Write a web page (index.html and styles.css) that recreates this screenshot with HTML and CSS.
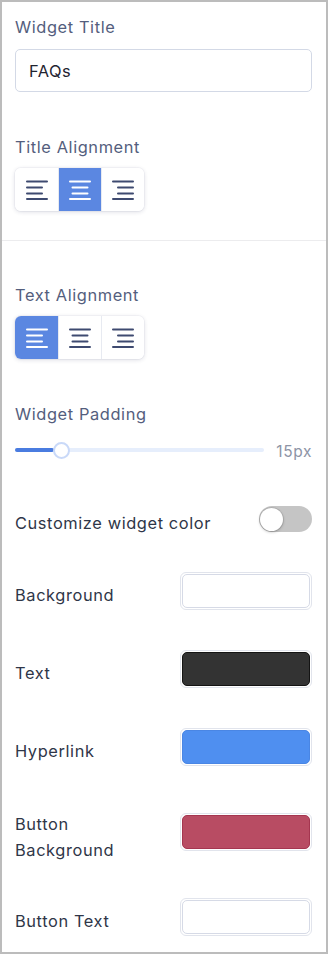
FILE: index.html
```html
<!DOCTYPE html>
<html lang="en">
<head>
<meta charset="utf-8">
<title>Widget settings</title>
<link rel="stylesheet" href="styles.css">
</head>
<body>
<div class="panel">
  <section class="field field-first">
    <div class="label label-title">Widget Title</div>
    <div class="input">FAQs</div>
  </section>

  <section class="field field-gap">
    <div class="label">Title Alignment</div>
    <div class="seg">
      <button class="seg-btn">
        <svg class="ico" viewBox="0 0 22 20"><path d="M1 1.5H21M1 7.5H16M1 13.5H16M1 19H21"/></svg>
      </button>
      <button class="seg-btn active">
        <svg class="ico" viewBox="0 0 22 20"><path d="M1 1.5H21M3.5 7.5H18.5M3.5 13.5H18.5M1 19H21"/></svg>
      </button>
      <button class="seg-btn">
        <svg class="ico" viewBox="0 0 22 20"><path d="M1 1.5H21M6 7.5H21M6 13.5H21M1 19H21"/></svg>
      </button>
    </div>
  </section>

  <hr class="divider">

  <section class="field field-after-divider">
    <div class="label">Text Alignment</div>
    <div class="seg">
      <button class="seg-btn active">
        <svg class="ico" viewBox="0 0 22 20"><path d="M1 1.5H21M1 7.5H16M1 13.5H16M1 19H21"/></svg>
      </button>
      <button class="seg-btn">
        <svg class="ico" viewBox="0 0 22 20"><path d="M1 1.5H21M3.5 7.5H18.5M3.5 13.5H18.5M1 19H21"/></svg>
      </button>
      <button class="seg-btn">
        <svg class="ico" viewBox="0 0 22 20"><path d="M1 1.5H21M6 7.5H21M6 13.5H21M1 19H21"/></svg>
      </button>
    </div>
  </section>

  <section class="field field-gap">
    <div class="label label-slider">Widget Padding</div>
    <div class="slider-row">
      <div class="track">
        <div class="fill" style="width: 15.5%"></div>
        <div class="thumb" style="left: 18.6%"></div>
      </div>
      <span class="slider-val">15px</span>
    </div>
  </section>

  <div class="row toggle-row">
    <span class="row-label">Customize widget color</span>
    <span class="toggle"><span class="knob"></span></span>
  </div>

  <div class="colors">
    <div class="row color-row">
      <span class="row-label">Background</span>
      <span class="swatch"><span class="swatch-fill sw-white"></span></span>
    </div>
    <div class="row color-row">
      <span class="row-label">Text</span>
      <span class="swatch"><span class="swatch-fill sw-dark"></span></span>
    </div>
    <div class="row color-row">
      <span class="row-label">Hyperlink</span>
      <span class="swatch"><span class="swatch-fill sw-blue"></span></span>
    </div>
    <div class="row color-row">
      <span class="row-label row-label-wrap">Button<br>Background</span>
      <span class="swatch"><span class="swatch-fill sw-red"></span></span>
    </div>
    <div class="row color-row">
      <span class="row-label">Button Text</span>
      <span class="swatch"><span class="swatch-fill sw-white"></span></span>
    </div>
  </div>
</div>
</body>
</html>
```
FILE: styles.css
```css
* { box-sizing: border-box; }

html, body {
  margin: 0;
  padding: 0;
  background: #ffffff;
}

body {
  font-family: Inter, "Noto Sans", "Liberation Sans", sans-serif;
  -webkit-font-smoothing: antialiased;
}

.panel {
  width: 328px;
  height: 954px;
  border: 2px solid #bcbcbc;
  padding: 13px 14px 0 13px;
  overflow: hidden;
}

.field { display: flex; flex-direction: column; align-items: flex-start; }

.label {
  font-size: 16.4px;
  line-height: 20px;
  padding-top: 2px;
  color: #545e7d;
  margin-bottom: 10px;
  letter-spacing: 0.6px;
}

.label-title { margin-bottom: 12px; }
.label-slider { margin-bottom: 16px; }

.field-gap { margin-top: 43px; }
.field-after-divider { margin-top: 42px; }

.input {
  width: 100%;
  height: 43px;
  border: 1px solid #d3d9e6;
  border-radius: 5px;
  padding: 0 13px;
  display: flex;
  align-items: center;
  font-size: 16.4px;
  letter-spacing: 0.5px;
  color: #1f2430;
}

.seg {
  display: flex;
  height: 43px;
  margin-top: 1px;
  border-radius: 6px;
  overflow: hidden;
  background: #fff;
  box-shadow: 0 1px 4px rgba(30, 40, 80, 0.16), 0 0 0 1px rgba(30, 40, 80, 0.03);
}

.seg-btn {
  width: 43px;
  height: 43px;
  border: 0;
  padding: 0;
  margin: 0;
  background: #fff;
  display: flex;
  align-items: center;
  justify-content: center;
  color: #3e4a70;
}

.seg-btn + .seg-btn { border-left: 1px solid #e7eaf1; }

.seg-btn.active {
  background: #5b87e1;
  color: #ffffff;
}

.ico {
  width: 22px;
  height: 20px;
  fill: none;
  stroke: currentColor;
  stroke-width: 2;
  stroke-linecap: round;
  overflow: visible;
}

.divider {
  border: 0;
  height: 1px;
  background: #ececee;
  margin: 29px -14px 0 -13px;
}

.slider-row {
  width: 100%;
  height: 20px;
  display: flex;
  align-items: center;
}

.track {
  position: relative;
  flex: 1;
  height: 4px;
  border-radius: 2px;
  background: #e6eefc;
}

.fill {
  height: 4px;
  border-radius: 2px;
  background: #4a7ce0;
}

.thumb {
  position: absolute;
  top: 50%;
  width: 17px;
  height: 17px;
  margin: -8.5px 0 0 -8.5px;
  border-radius: 50%;
  background: #fff;
  border: 2px solid #c9d9f8;
}

.slider-val {
  margin-left: 12px;
  font-size: 15.5px;
  letter-spacing: 0.6px;
  color: #8d94a6;
  padding-top: 2px;
}

.row {
  display: flex;
  align-items: center;
  justify-content: space-between;
}

.row-label {
  font-size: 16.4px;
  line-height: 26px;
  color: #2f3648;
  letter-spacing: 0.6px;
  padding-top: 4px;
  margin-bottom: -4px;
}

.row-label-wrap {
  padding-top: 5px;
  margin-bottom: -5px;
}

.toggle-row { margin-top: 46px; height: 26px; }

.toggle {
  position: relative;
  width: 53px;
  height: 26px;
  border-radius: 13px;
  background: #c5c5c5;
}

.knob {
  position: absolute;
  left: 1px;
  top: 1.5px;
  width: 23px;
  height: 23px;
  border-radius: 50%;
  background: #fff;
  box-shadow: 0 0 0 1px rgba(0,0,0,0.08), 0 1px 3px rgba(0,0,0,0.25);
}

.colors {
  margin-top: 40px;
  display: flex;
  flex-direction: column;
  gap: 40px;
}

.color-row { min-height: 38px; }

.swatch {
  width: 132px;
  height: 38px;
  border: 1px solid #e1e4ec;
  border-radius: 6px;
  padding: 1px;
  display: flex;
}

.swatch-fill {
  flex: 1;
  border-radius: 5px;
  border: 1px solid transparent;
}

.sw-white { background: #fff; border-color: #d6dae6; }
.sw-dark { background: #333333; border-color: #141414; }
.sw-blue { background: #4f8ff0; border-color: #4a86e4; }
.sw-red { background: #b84c63; border-color: #a53650; }
```
